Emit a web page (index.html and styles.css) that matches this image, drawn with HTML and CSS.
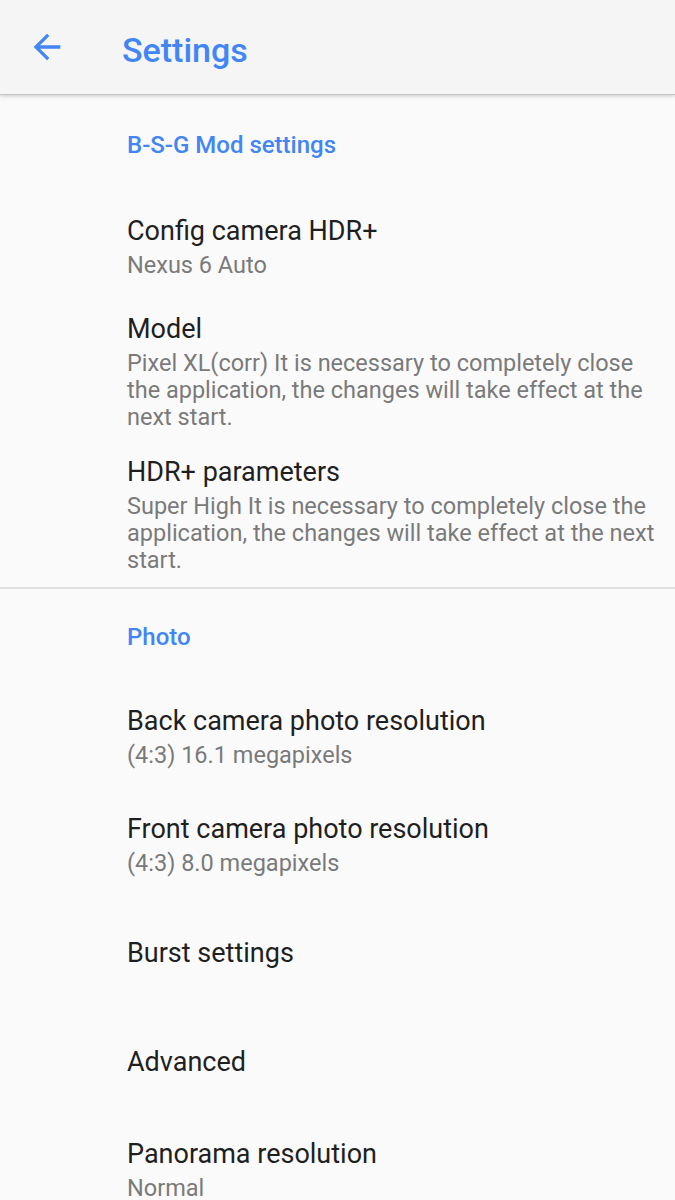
FILE: index.html
```html
<!DOCTYPE html>
<html lang="en">
<head>
<meta charset="utf-8">
<title>Settings</title>
<link rel="stylesheet" href="styles.css">
</head>
<body>
<header class="toolbar">
  <svg class="back" viewBox="0 0 24 24" width="40" height="40" aria-hidden="true">
    <path d="M20 11H7.83l5.59-5.59L12 4l-8 8 8 8 1.41-1.41L7.83 13H20v-2z" fill="#4285f4"/>
  </svg>
  <h1 class="toolbar-title">Settings</h1>
</header>
<main class="prefs">
  <section class="group">
    <div class="category first">B-S-G Mod settings</div>
    <div class="pref">
      <div class="pref-title">Config camera HDR+</div>
      <div class="pref-summary">Nexus 6 Auto</div>
    </div>
    <div class="pref tall">
      <div class="pref-title">Model</div>
      <div class="pref-summary">Pixel XL(corr) It is necessary to completely close the application, the changes will take effect at the next start.</div>
    </div>
    <div class="pref tall">
      <div class="pref-title">HDR+ parameters</div>
      <div class="pref-summary">Super High It is necessary to completely close the application, the changes will take effect at the next start.</div>
    </div>
  </section>
  <hr class="divider">
  <section class="group">
    <div class="category">Photo</div>
    <div class="pref">
      <div class="pref-title">Back camera photo resolution</div>
      <div class="pref-summary">(4:3) 16.1 megapixels</div>
    </div>
    <div class="pref">
      <div class="pref-title">Front camera photo resolution</div>
      <div class="pref-summary">(4:3) 8.0 megapixels</div>
    </div>
    <div class="pref single">
      <div class="pref-title">Burst settings</div>
    </div>
    <div class="pref">
      <div class="pref-title">Advanced</div>
    </div>
    <div class="pref">
      <div class="pref-title">Panorama resolution</div>
      <div class="pref-summary">Normal</div>
    </div>
  </section>
</main>
</body>
</html>
```
FILE: styles.css
```css
* { box-sizing: border-box; }
html, body {
  margin: 0;
  padding: 0;
  background: #fafafa;
  font-family: Roboto, "Liberation Sans", sans-serif;
}
body { overflow: hidden; height: 1200px; }

.toolbar {
  position: relative;
  z-index: 2;
  display: flex;
  align-items: flex-start;
  height: 94px;
  padding-left: 27px;
  background: #f5f5f5;
  box-shadow: 0 1px 0 #c4c4c4, 0 2px 3px rgba(0,0,0,0.14), 0 3px 6px rgba(0,0,0,0.05);
}
.back {
  display: block;
  flex: none;
  margin-top: 27px;
}
.toolbar-title {
  margin: 30px 0 0 55px;
  font-size: 34px;
  line-height: 40px;
  font-weight: 500;
  color: #4285f4;
}

.prefs { padding: 0; }

.category {
  padding: 35px 15px 32px 127px;
  font-size: 24px;
  line-height: 27px;
  font-weight: 500;
  color: #4285f4;
}
.category.first {
  padding-top: 38px;
  padding-bottom: 34px;
}

.pref {
  display: flex;
  flex-direction: column;
  justify-content: center;
  min-height: 108px;
  padding: 0 15px 0 127px;
}
.pref.tall {
  min-height: 0;
  padding-top: 13px;
  padding-bottom: 13px;
}
.pref.single { min-height: 109px; }

.pref-title {
  font-size: 27px;
  line-height: 31px;
  color: #1f1f1f;
}
.pref-summary {
  margin-top: 5px;
  font-size: 23.5px;
  line-height: 27px;
  color: #7a7a7a;
}

.divider {
  margin: 0;
  border: 0;
  height: 2px;
  background: #e0e0e0;
}
```
